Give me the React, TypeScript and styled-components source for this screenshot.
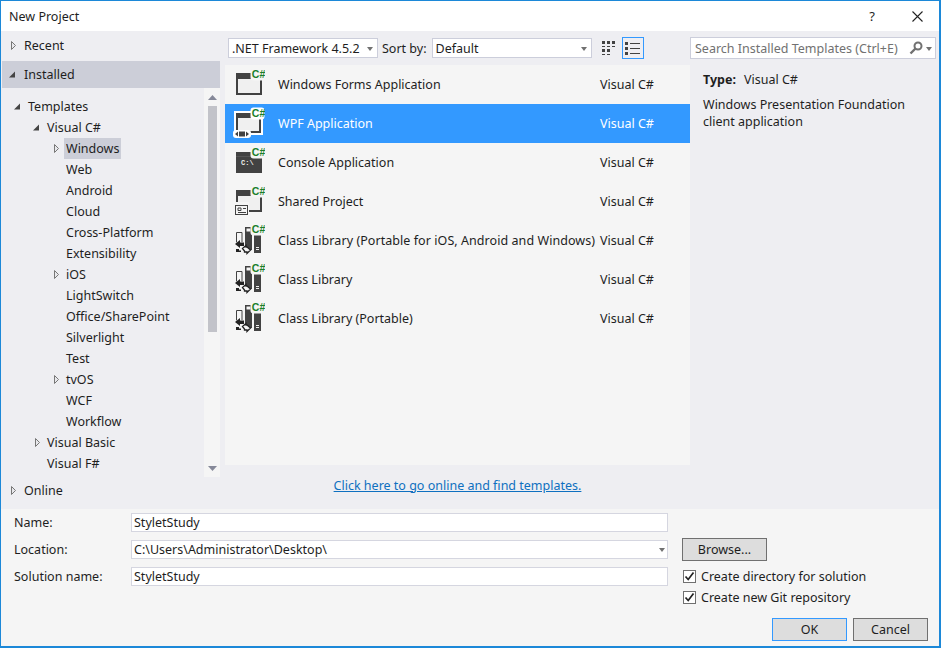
import React from "react";
import styled, { createGlobalStyle } from "styled-components";

const Global = createGlobalStyle`
  html, body { margin: 0; padding: 0; width: 941px; height: 648px; overflow: hidden; background: #f5f5f5; }
  * { box-sizing: border-box; }
  body { font-family: "Noto Sans", "Noto Sans CJK SC", sans-serif; font-size: 12.5px; color: #1e1e1e; }
`;

const Win = styled.div`
  width: 941px; height: 648px; display: flex; flex-direction: column;
  border: solid #1c88d8; border-width: 1px 2px 2px 1px; background: #f5f5f5;
`;
const TitleBar = styled.div`
  height: 30px; flex: none; background: #fff; display: flex; align-items: center; padding: 0 0 0 8px;
`;
const Title = styled.div`flex: 1; font-size: 12.5px;`;
const Help = styled.div`width: 24px; text-align: center; font-size: 13px; margin-right: 28px;`;
const CloseBtn = styled.div`width: 11px; height: 11px; margin-right: 16px; display: flex;`;

const Main = styled.div`
  height: 478px; flex: none; background: #eeeef2; display: flex; padding-left: 1px;
`;
const Left = styled.div`width: 218px; flex: none; display: flex; flex-direction: column;`;
const Cat = styled.div<{ $on?: boolean }>`
  height: ${p => (p.$on ? 27 : 21)}px; flex: none; display: flex; align-items: center; padding-left: 6px; gap: 8px;
  margin-top: ${p => (p.$on ? 5 : 0)}px;
  background: ${p => (p.$on ? "#ccced8" : "transparent")};
`;
const RecentCat = styled(Cat)`margin-top: 4px;`;
const OnlineCat = styled(Cat)`margin-top: 3px;`;
const TreeWrap = styled.div`height: 389px; flex: none; display: flex;`;
const Tree = styled.div`flex: 1; padding-top: 8px; overflow: hidden; min-width: 0;`;
const Row = styled.div<{ $lvl: number }>`
  height: 21px; display: flex; align-items: center; padding-left: ${p => 11 + p.$lvl * 19}px; white-space: nowrap;
`;
const ArrowBox = styled.span`width: 8px; height: 9px; display: flex; flex: none;`;
const RowLabel = styled.span<{ $sel?: boolean }>`
  margin-left: ${p => (p.$sel ? 5 : 7)}px; padding: 0 ${p => (p.$sel ? 2 : 0)}px; height: 21px; display: flex; align-items: center;
  background: ${p => (p.$sel ? "#ccced8" : "transparent")};
`;
const Scroll = styled.div`
  width: 16px; flex: none; background: #f5f5f5; display: flex; flex-direction: column; align-items: center;
`;
const ScrollBtn = styled.div`height: 18px; width: 16px; flex: none; display: flex; align-items: center; justify-content: center;`;
const Thumb = styled.div`width: 9px; height: 226px; background: #c2c3c9; flex: none;`;
const Spacer = styled.div`flex: 1;`;

const Middle = styled.div`width: 465px; flex: none; margin-left: 5px; display: flex; flex-direction: column;`;
const Toolbar = styled.div`
  height: 34px; flex: none; display: flex; align-items: center; padding: 0 0 0 3px;
`;
const Combo = styled.div<{ $w: number }>`
  width: ${p => p.$w}px; height: 20px; background: #fff; border: 1px solid #cccedb; display: flex; align-items: center;
  justify-content: space-between; padding: 0 4px 0 3px; flex: none;
`;
const Caret = styled.span`
  width: 0; height: 0; border: solid transparent; border-width: 4px 3.5px 0; border-top-color: #717171; margin-top: 1px;
`;
const SortLabel = styled.span`margin: 0 5px 0 4px;`;
const ViewGroup = styled.div`display: flex; margin-left: 6px; gap: 2px;`;
const ViewBtn = styled.div<{ $on?: boolean }>`
  width: 22px; height: 22px; flex: none; display: flex; align-items: center; justify-content: center;
  border: 1px solid ${p => (p.$on ? "#3399ff" : "transparent")};
`;
const List = styled.div`height: 400px; flex: none; background: #f5f5f5;`;
const Item = styled.div<{ $on?: boolean }>`
  height: 39px; display: flex; align-items: center; padding-left: 8px;
  background: ${p => (p.$on ? "#3399ff" : "transparent")};
  color: ${p => (p.$on ? "#fff" : "#1e1e1e")};
`;
const IconBox = styled.span`width: 32px; height: 33px; flex: none; display: flex; margin-right: 13px;`;
const ItemName = styled.span<{ $wide?: boolean }>`flex: 1; white-space: nowrap; letter-spacing: ${p => (p.$wide ? "0.06px" : "0")};`;
const ItemLang = styled.span`width: 90px; flex: none;`;
const LinkRow = styled.div`flex: 1; display: flex; align-items: center; justify-content: center; padding-bottom: 4px;`;
const Link = styled.a`color: #0e70c0; text-decoration: underline;`;

const Right = styled.div`flex: 1; display: flex; flex-direction: column; min-width: 0;`;
const Search = styled.div`
  height: 22px; margin-top: 6px; width: 246px; background: #fff; border: 1px solid #cccedb; display: flex; align-items: center;
  padding: 0 3px 0 4px; color: #717171; justify-content: space-between; white-space: nowrap;
`;
const SearchTail = styled.span`display: flex; align-items: center; gap: 3px;`;
const Details = styled.div`padding: 12px 13px;`;
const TypeLine = styled.div`display: flex; gap: 8px; line-height: 17px; margin-bottom: 8px;`;
const Strong = styled.b`font-weight: 700;`;
const Desc = styled.div`line-height: 17px; width: 215px;`;

const Bottom = styled.div`flex: 1; display: grid; grid-template-columns: 120px 537px 13px 1fr; grid-template-rows: 27px 27px 27px 21px 1fr;`;
const FieldLabel = styled.div<{ $row: number }>`grid-column: 1; grid-row: ${p => p.$row}; display: flex; align-items: center; padding-left: 13px;`;
const Field = styled.div<{ $row: number }>`
  grid-column: 2; grid-row: ${p => p.$row}; height: 19px; align-self: start; margin: 4px 0 0 10px; background: #fff; border: 1px solid #d5d6e0;
  padding: 0 2px 0 2px; display: flex; align-items: center; justify-content: space-between; width: 537px;
`;
const BrowseCell = styled.div`grid-column: 4; grid-row: 2; display: flex; align-items: flex-start; padding: 2px 0 0 11px;`;
const Btn = styled.div<{ $on?: boolean }>`
  width: 75px; height: 23px; background: #dddddd; border: 1px solid ${p => (p.$on ? "#3399ff" : "#707070")};
  display: flex; align-items: center; justify-content: center; flex: none;
`;
const BrowseBtn = styled(Btn)`width: 85px;`;
const ChecksCell = styled.div`grid-column: 4; grid-row: 3 / span 2; display: flex; flex-direction: column; padding: 3px 0 0 12px;`;
const Check = styled.div`height: 21px; display: flex; align-items: center; gap: 5px;`;
const Box = styled.span`width: 13px; height: 13px; background: #fff; border: 1px solid #707070; display: flex; flex: none;`;
const Actions = styled.div`grid-column: 1 / -1; grid-row: 5; display: flex; justify-content: flex-end; gap: 6px; padding: 7px 11px 0 0;`;

const DARK = "#424242";

const Tri = ({ open }: { open?: boolean }) =>
  open ? (
    <svg width="8" height="9" viewBox="0 0 8 9"><path d="M7 1.5V7.5H1z" fill="#444" /></svg>
  ) : (
    <svg width="8" height="9" viewBox="0 0 8 9"><path d="M3.5 .5L7.5 4.5L3.5 8.5z" fill="#e8e8ec" stroke="#777" /></svg>
  );

const CSharp = ({ on, y = 10 }: { on?: boolean; y?: number }) => (
  <g>
    <rect x="17.5" y={y - 9.5} width="14" height="12" rx="3" fill={on ? "#fff" : "#f5f5f5"} />
    <text x="18.8" y={y} fontFamily="Liberation Sans, sans-serif" fontSize="10.5" fontWeight="700" fill="#1a7f2a">C#</text>
  </g>
);

const Icon = ({ children }: { children: React.ReactNode }) => (
  <svg width="32" height="33" viewBox="0 0 32 33">{children}</svg>
);

const FormIcon = () => (
  <Icon>
    <rect x="3" y="5" width="26" height="22" fill={DARK} />
    <rect x="5" y="11" width="22" height="14" fill="#f0f0f0" />
    <CSharp />
  </Icon>
);
const ConsoleIcon = () => (
  <Icon>
    <rect x="3" y="6" width="26" height="21" fill={DARK} />
    <rect x="3" y="10" width="26" height="1" fill="#555" />
    <text x="8" y="19" fontFamily="Liberation Mono, monospace" fontSize="7" fontWeight="700" fill="#eee">C:\</text>
    <CSharp />
  </Icon>
);
const WpfIcon = () => (
  <Icon>
    <rect x="1" y="4" width="29" height="24" fill="#fff" />
    <rect x="3" y="6" width="25" height="20" fill={DARK} />
    <rect x="5" y="11" width="21" height="13" fill="#f0f0f0" />
    <rect x="0" y="23" width="18" height="8" rx="3" fill="#fff" />
    <rect x="6" y="24.5" width="6" height="5" fill={DARK} />
    <path d="M5 24.5L2 27L5 29.5zM13 24.5L16 27L13 29.5z" fill={DARK} />
    <CSharp on />
  </Icon>
);
const SharedIcon = () => (
  <Icon>
    <rect x="3" y="5" width="26" height="22" fill={DARK} />
    <rect x="5" y="11" width="22" height="14" fill="#f0f0f0" />
    <rect x="1" y="17" width="15" height="14" fill="#f5f5f5" />
    <rect x="2.5" y="20.5" width="12" height="9" fill="none" stroke={DARK} />
    <path d="M5 23h3v2.5H5zM10 23.5h3M5 27.5h8" stroke={DARK} fill="none" strokeWidth="1" />
    <CSharp />
  </Icon>
);
const LibIcon = () => (
  <Icon>
    <path d="M3.5 8.5h5.5v11h-5.5z" fill="#f5f5f5" stroke={DARK} />
    <path d="M12 3h7v23h-7z" fill={DARK} />
    <path d="M13.5 4.5h4v3h-4z" fill="#f5f5f5" />
    <path d="M21 9h2v-2h3v2h2v20h-7z" fill={DARK} />
    <path d="M23 23.5h3M23 25.5h3" stroke="#eee" />
    <path d="M2 20l5-4v2.5h4v3.5H7V24z" fill="#222" stroke="#f5f5f5" strokeWidth="1" paintOrder="stroke" />
    <path d="M9.5 24.5l3.5-3v1.500h1l3.500 3-3.500 3.500v-1.500h-2.500v-1z" fill="#f5f5f5" stroke="#222" strokeWidth="1.300" />
    <path d="M3 25h3v1.500h2V28H3z" fill="#222" />
    <CSharp y={9} />
  </Icon>
);

const tree: [number, string, "open" | "closed" | "none", boolean?][] = [
  [0, "Templates", "open"],
  [1, "Visual C#", "open"],
  [2, "Windows", "closed", true],
  [2, "Web", "none"],
  [2, "Android", "none"],
  [2, "Cloud", "none"],
  [2, "Cross-Platform", "none"],
  [2, "Extensibility", "none"],
  [2, "iOS", "closed"],
  [2, "LightSwitch", "none"],
  [2, "Office/SharePoint", "none"],
  [2, "Silverlight", "none"],
  [2, "Test", "none"],
  [2, "tvOS", "closed"],
  [2, "WCF", "none"],
  [2, "Workflow", "none"],
  [1, "Visual Basic", "closed"],
  [1, "Visual F#", "none"],
];

const items: [string, React.ReactNode, boolean?][] = [
  ["Windows Forms Application", <FormIcon />],
  ["WPF Application", <WpfIcon />, true],
  ["Console Application", <ConsoleIcon />],
  ["Shared Project", <SharedIcon />],
  ["Class Library (Portable for iOS, Android and Windows)", <LibIcon />],
  ["Class Library", <LibIcon />],
  ["Class Library (Portable)", <LibIcon />],
];

export default function App() {
  return (
    <Win>
      <Global />
      <TitleBar>
        <Title>New Project</Title>
        <Help>?</Help>
        <CloseBtn>
          <svg width="11" height="11" viewBox="0 0 11 11"><path d="M.5.5l10 10M10.5.5l-10 10" stroke="#222" strokeWidth="1.1" /></svg>
        </CloseBtn>
      </TitleBar>
      <Main>
        <Left>
          <RecentCat><ArrowBox><Tri /></ArrowBox>Recent</RecentCat>
          <Cat $on><ArrowBox><Tri open /></ArrowBox>Installed</Cat>
          <TreeWrap>
            <Tree>
              {tree.map(([l, t, a, s]) => (
                <Row key={t} $lvl={l}>
                  <ArrowBox>{a !== "none" && <Tri open={a === "open"} />}</ArrowBox>
                  <RowLabel $sel={s}>{t}</RowLabel>
                </Row>
              ))}
            </Tree>
            <Scroll>
              <ScrollBtn><svg width="9" height="5" viewBox="0 0 9 5"><path d="M4.5 0L9 5H0z" fill="#868999" /></svg></ScrollBtn>
              <Thumb />
              <Spacer />
              <ScrollBtn><svg width="9" height="5" viewBox="0 0 9 5"><path d="M0 0H9L4.5 5z" fill="#868999" /></svg></ScrollBtn>
            </Scroll>
          </TreeWrap>
          <OnlineCat><ArrowBox><Tri /></ArrowBox>Online</OnlineCat>
        </Left>
        <Middle>
          <Toolbar>
            <Combo $w={150}>.NET Framework 4.5.2<Caret /></Combo>
            <SortLabel>Sort by:</SortLabel>
            <Combo $w={160}>Default<Caret /></Combo>
            <ViewGroup>
              <ViewBtn>
                <svg width="14" height="15" viewBox="0 0 14 15" fill={DARK}>
                  <rect x="0" y="0" width="3" height="3" /><rect x="5" y="0" width="3" height="3" /><rect x="10" y="0" width="3" height="3" />
                  <rect x="0" y="5" width="3" height="1" /><rect x="5" y="5" width="3" height="1" /><rect x="10" y="5" width="3" height="1" />
                  <rect x="0" y="8" width="3" height="3" /><rect x="5" y="8" width="3" height="3" />
                  <rect x="0" y="13" width="3" height="1" /><rect x="5" y="13" width="3" height="1" />
                </svg>
              </ViewBtn>
              <ViewBtn $on>
                <svg width="15" height="15" viewBox="0 0 15 15" fill={DARK}>
                  {[1, 6, 11].map(y => <g key={y}><rect x="0" y={y} width="3" height="3" /><rect x="5" y={y + 1} width="10" height="1" /></g>)}
                </svg>
              </ViewBtn>
            </ViewGroup>
          </Toolbar>
          <List>
            {items.map(([n, ic, on]) => (
              <Item key={n} $on={on}>
                <IconBox>{ic}</IconBox>
                <ItemName $wide={n.length > 30}>{n}</ItemName>
                <ItemLang>Visual C#</ItemLang>
              </Item>
            ))}
          </List>
          <LinkRow><Link>Click here to go online and find templates.</Link></LinkRow>
        </Middle>
        <Right>
          <Search>
            Search Installed Templates (Ctrl+E)
            <SearchTail>
              <svg width="14" height="14" viewBox="0 0 14 14"><circle cx="9" cy="5" r="3.5" fill="none" stroke="#717171" strokeWidth="2" /><path d="M6.5 7.5L1.5 12.5" stroke="#717171" strokeWidth="2.4" /></svg>
              <Caret />
            </SearchTail>
          </Search>
          <Details>
            <TypeLine><Strong>Type:</Strong><span>Visual C#</span></TypeLine>
            <Desc>Windows Presentation Foundation client application</Desc>
          </Details>
        </Right>
      </Main>
      <Bottom>
        <FieldLabel $row={1}>Name:</FieldLabel>
        <Field $row={1}>StyletStudy</Field>
        <FieldLabel $row={2}>Location:</FieldLabel>
        <Field $row={2}>C:\Users\Administrator\Desktop\<Caret /></Field>
        <FieldLabel $row={3}>Solution name:</FieldLabel>
        <Field $row={3}>StyletStudy</Field>
        <BrowseCell><BrowseBtn>Browse...</BrowseBtn></BrowseCell>
        <ChecksCell>
          {["Create directory for solution", "Create new Git repository"].map(t => (
            <Check key={t}>
              <Box><svg width="11" height="11" viewBox="0 0 11 11"><path d="M1.5 5.5L4.2 8.500L9.500 1.500" fill="none" stroke="#222" strokeWidth="1.7" /></svg></Box>
              {t}
            </Check>
          ))}
        </ChecksCell>
        <Actions>
          <Btn $on>OK</Btn>
          <Btn>Cancel</Btn>
        </Actions>
      </Bottom>
    </Win>
  );
}
